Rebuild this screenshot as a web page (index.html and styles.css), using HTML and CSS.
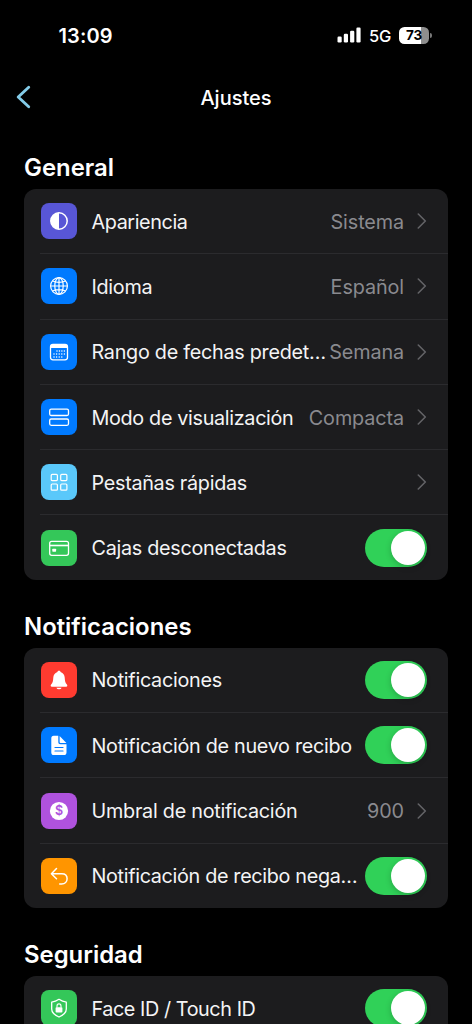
FILE: index.html
```html
<!DOCTYPE html>
<html lang="es">
<head>
<meta charset="utf-8">
<meta name="viewport" content="width=device-width">
<title>Ajustes</title>
<link rel="stylesheet" href="styles.css">
</head>
<body>
<svg class="defs" width="0" height="0"><defs>
<symbol id="chev" viewBox="0 0 10 16"><path d="M1.3 1l7 7-7 7" fill="none" stroke="#636367" stroke-width="1.6" stroke-linecap="round" stroke-linejoin="round"/></symbol>
</defs></svg>
<div class="phone">
<header class="status">
  <span class="time">13:09</span>
  <div class="indicators">
    <svg class="signal" width="25" height="16" viewBox="0 0 25 16" fill="#fff"><rect x="0.5" y="9.5" width="4.2" height="6" rx="1.2"/><rect x="6.8" y="6.7" width="4.2" height="8.8" rx="1.2"/><rect x="13.1" y="3.8" width="4.2" height="11.7" rx="1.2"/><rect x="19.4" y="0.5" width="4.2" height="15" rx="1.2"/></svg>
    <span class="network">5G</span>
    <span class="battery"><span class="level">73</span></span>
    <span class="tip"></span>
  </div>
</header>
<nav class="navbar">
  <svg class="back" width="16" height="24" viewBox="0 0 16 24"><path d="M13.7 2.300L3.200 12l10.500 9.700" fill="none" stroke="#83cbe8" stroke-width="2.900" stroke-linecap="round" stroke-linejoin="round"/></svg>
  <h1 class="title">Ajustes</h1>
</nav>
<main class="content">
<section class="group">
  <h2 class="heading">General</h2>
  <div class="card">
    <div class="row"><span class="icon indigo"><svg viewBox="0 0 36 36"><circle cx="18" cy="18" r="8.2" fill="none" stroke="#fff" stroke-width="1.5"/><path d="M18 9.800a8.200 8.200 0 0 0 0 16.400z" fill="#fff"/></svg></span><span class="label l-look">Apariencia</span><span class="value">Sistema</span><svg class="chev"><use href="#chev"/></svg></div>
    <div class="row"><span class="icon blue"><svg viewBox="0 0 36 36" fill="none" stroke="#fff" stroke-width="1.2"><circle cx="18" cy="18" r="8.400"/><ellipse cx="18" cy="18" rx="4.200" ry="8.400"/><path d="M18 9.600v16.800M9.600 18h16.800M11.500 13q6.500 2.600 13 0M11.500 23q6.500-2.600 13 0"/></svg></span><span class="label">Idioma</span><span class="value">Español</span><svg class="chev"><use href="#chev"/></svg></div>
    <div class="row"><span class="icon blue"><svg viewBox="0 0 36 36"><rect x="9.500" y="10.500" width="17" height="15.300" rx="2.500" fill="none" stroke="#fff" stroke-width="1.300"/><path d="M9.500 14v-1a2.500 2.500 0 0 1 2.500-2.500h12a2.500 2.500 0 0 1 2.500 2.500v1z" fill="#fff"/><g fill="none" stroke="#fff" stroke-width="1.500" stroke-linecap="round"><path d="M16 17h7.500" stroke-dasharray="0 2.450"/><path d="M13 20h10.500" stroke-dasharray="0 2.600"/><path d="M13 23h8.500" stroke-dasharray="0 2.600"/></g></svg></span><span class="label l-range">Rango de fechas predet…</span><span class="value">Semana</span><svg class="chev"><use href="#chev"/></svg></div>
    <div class="row"><span class="icon blue"><svg viewBox="0 0 36 36" fill="none" stroke="#fff" stroke-width="1.300"><rect x="8.700" y="10.200" width="18.800" height="6.300" rx="1.500"/><rect x="8.700" y="20" width="18.800" height="6.300" rx="1.500"/></svg></span><span class="label l-mode">Modo de visualización</span><span class="value">Compacta</span><svg class="chev"><use href="#chev"/></svg></div>
    <div class="row"><span class="icon sky"><svg viewBox="0 0 36 36" fill="none" stroke="#fff" stroke-width="1.200"><rect x="10.200" y="10.400" width="6.200" height="6.200" rx="1"/><rect x="19.700" y="10.400" width="6.200" height="6.200" rx="1"/><rect x="10.200" y="20" width="6.200" height="6.200" rx="1"/><rect x="19.700" y="20" width="6.200" height="6.200" rx="1"/></svg></span><span class="label">Pestañas rápidas</span><svg class="chev"><use href="#chev"/></svg></div>
    <div class="row"><span class="icon green"><svg viewBox="0 0 36 36"><rect x="8.700" y="11.300" width="18.800" height="14" rx="2" fill="none" stroke="#fff" stroke-width="1.300"/><path d="M8.700 15.500h18.800" stroke="#fff" stroke-width="1.600"/><rect x="11.300" y="18.700" width="3.800" height="3" rx=".6" fill="#fff"/></svg></span><span class="label">Cajas desconectadas</span><span class="switch"><span class="knob"></span></span></div>
  </div>
</section>
<section class="group">
  <h2 class="heading">Notificaciones</h2>
  <div class="card">
    <div class="row"><span class="icon red"><svg viewBox="0 0 36 36" fill="#fff"><path d="M18 8.800c.9 0 1.400.5 1.600 1.200 2.700.9 3.900 3 4.100 5.500.2 3.600.6 5.300 2.200 6.900.7.700.6 2.400-.8 2.400H10.900c-1.400 0-1.500-1.700-.8-2.400 1.600-1.600 2-3.300 2.200-6.900.2-2.500 1.400-4.600 4.100-5.500.2-.7.700-1.200 1.600-1.200z"/><path d="M15.400 25.700h5.200a2.700 2.100 0 0 1-5.200 0z"/></svg></span><span class="label">Notificaciones</span><span class="switch"><span class="knob"></span></span></div>
    <div class="row"><span class="icon blue"><svg viewBox="0 0 36 36"><path d="M12.700 8.800h4.600v6.300c0 1.400.8 2.200 2.200 2.200h6v8.200c0 1.600-1 2.600-2.600 2.600H12.900c-1.700 0-2.600-1-2.600-2.600V11.400c0-1.600.8-2.600 2.400-2.600z" fill="#fff"/><path d="M18.600 9v6.100c0 .6.300.9.900.9h5.900z" fill="#fff"/><path d="M14 20.500h8M14 24h8" stroke="#007aff" stroke-width="1.200" stroke-linecap="round"/></svg></span><span class="label">Notificación de nuevo recibo</span><span class="switch"><span class="knob"></span></span></div>
    <div class="row"><span class="icon purple"><svg viewBox="0 0 36 36"><circle cx="18" cy="18" r="9.100" fill="#fff"/><text class="dollar" x="18" y="22.400" text-anchor="middle">$</text></svg></span><span class="label l-threshold">Umbral de notificación</span><span class="value">900</span><svg class="chev"><use href="#chev"/></svg></div>
    <div class="row"><span class="icon orange"><svg viewBox="0 0 36 36" fill="none" stroke="#fff" stroke-width="1.500" stroke-linecap="round" stroke-linejoin="round"><path d="M15.500 10.500L10.400 15.700l5.100 5.100M10.600 15.700h10.200c3.200 0 5.300 2.100 5.300 5s-2.200 5.200-5.400 5.200h-2"/></svg></span><span class="label l-negative">Notificación de recibo nega…</span><span class="switch"><span class="knob"></span></span></div>
  </div>
</section>
<section class="group">
  <h2 class="heading">Seguridad</h2>
  <div class="card">
    <div class="row"><span class="icon green"><svg viewBox="0 0 36 36"><path d="M18 9.300q3.500 2.300 7.300 2.900v6.800c0 3.800-3.100 6.200-7.300 8-4.200-1.800-7.300-4.200-7.300-8v-6.800q3.800-.6 7.300-2.900z" fill="none" stroke="#fff" stroke-width="1.300" stroke-linejoin="round"/><rect x="14.600" y="17.300" width="6.800" height="5.200" rx=".8" fill="#fff"/><path d="M16 17.500v-1.600a2 2 0 0 1 4 0v1.600" fill="none" stroke="#fff" stroke-width="1.100"/></svg></span><span class="label l-face">Face ID / Touch ID</span><span class="switch"><span class="knob"></span></span></div>
  </div>
</section>
</main>
</div>
</body>
</html>
```
FILE: styles.css
```css
* { box-sizing: border-box; }
html, body { margin: 0; background: #000; }
body { font-family: Inter, "Liberation Sans", sans-serif; color: #fff; }
.defs { display: block; }
.phone { height: 1024px; overflow: hidden; }
.status { height: 70px; padding: 0 40px 0 58.5px; display: flex; align-items: center; justify-content: space-between; }
.time { font-size: 20px; font-weight: 600; letter-spacing: .15px; padding-top: 1px; }
.indicators { display: flex; align-items: center; }
.network { margin-left: 7px; font-size: 16.5px; font-weight: 500; letter-spacing: -.3px; width: 23px; padding-top: 1px; }
.battery { width: 30px; height: 17px; margin-left: 7px; border-radius: 5.5px; overflow: hidden; background: linear-gradient(90deg, #fff 73%, #8e8e8e 73%); display: flex; justify-content: center; align-items: center; }
.level { color: #000; font-size: 13.5px; line-height: 17px; font-weight: 700; letter-spacing: -.2px; }
.tip { width: 2px; height: 5px; margin-left: 1px; border-radius: 0 2px 2px 0; background: #777; }
.navbar { height: 54px; padding: 0 15px; display: grid; grid-template-columns: 24px 1fr 24px; align-items: center; }
.title { margin: 0; padding-top: 1px; text-align: center; font-size: 20px; font-weight: 500; line-height: 24px; }
.content { padding: 28px 24px 0; }
.group { margin-bottom: 31px; }
.heading { margin: 0 0 7px; padding-top: 1px; height: 30px; line-height: 30px; font-size: 23.9px; font-weight: 600; white-space: nowrap; }
.card { background: #1c1c1e; border-radius: 12px; }
.row { height: 65.3px; display: flex; align-items: center; margin-left: 16px; padding-right: 21.5px; border-bottom: 1px solid #2b2b2e; }
.row:last-child { height: 64.3px; border-bottom: 0; }
.icon { width: 36px; height: 36px; flex: none; margin: 0 14.5px 0 1px; border-radius: 8px; }
.icon svg { display: block; width: 36px; height: 36px; }
.indigo { background: #5856d6; }
.blue { background: #007aff; }
.sky { background: #5ac8fa; }
.green { background: #34c759; }
.red { background: #ff3b30; }
.purple { background: #af52de; }
.orange { background: #ff9500; }
.dollar { font-size: 12.500px; font-weight: 600; fill: #af52de; }
.label { flex: 1; min-width: 0; padding-top: 1px; font-size: 19.800px; line-height: 26px; letter-spacing: -.29px; white-space: nowrap; color: #f4f4f5; }
.l-look { letter-spacing: -.4px; }
.l-range { letter-spacing: -.27px; }
.l-mode { letter-spacing: -.33px; }
.l-threshold { letter-spacing: -.25px; }
.l-negative { letter-spacing: -.33px; }
.l-face { letter-spacing: -.42px; }
.value { padding-top: 1px; font-size: 19.800px; line-height: 26px; letter-spacing: -.1px; color: #8a8a8f; white-space: nowrap; }
.chev { width: 10px; height: 16px; flex: none; margin-left: 12.5px; }
.switch { width: 61.5px; height: 38px; flex: none; padding: 2px; border-radius: 19px; background: #30d158; display: flex; justify-content: flex-end; }
.knob { width: 34px; height: 34px; border-radius: 50%; background: #fff; box-shadow: 0 2px 6px rgba(0,0,0,.2); }
```
